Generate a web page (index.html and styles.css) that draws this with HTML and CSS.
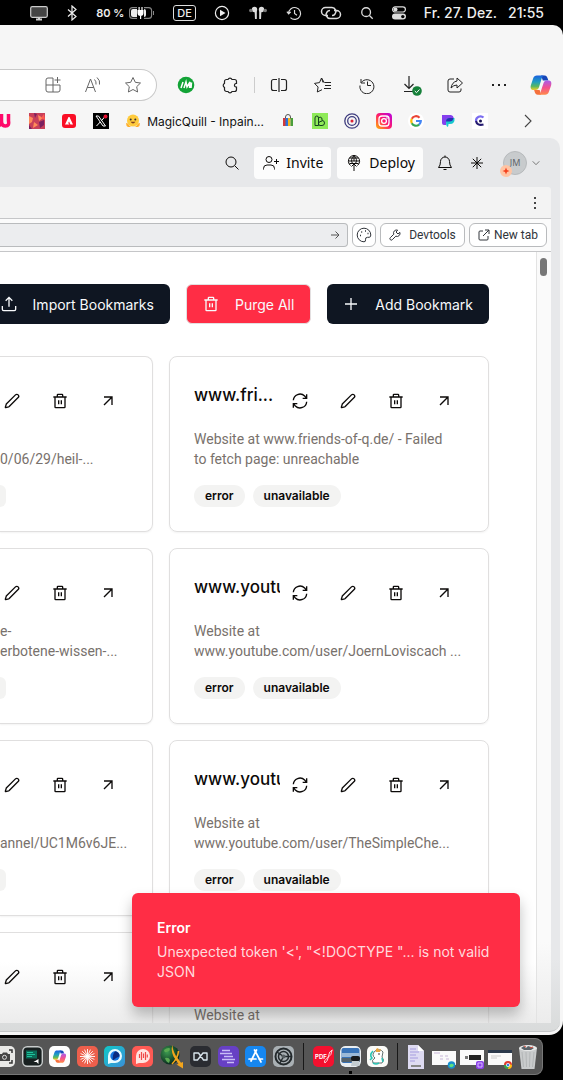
FILE: index.html
```html
<!DOCTYPE html>
<html lang="en">
<head>
<meta charset="utf-8">
<meta name="viewport" content="width=device-width, initial-scale=1">
<title>Bookmarks</title>
<link rel="stylesheet" href="styles.css">
</head>
<body>
<svg class="sprite" aria-hidden="true">
  <defs>
    <linearGradient id="g-blue" x1="0" y1="0" x2="0" y2="1"><stop offset="0" stop-color="#1b5fe0"/><stop offset=".45" stop-color="#1f9fc0"/><stop offset=".75" stop-color="#5ab860"/><stop offset="1" stop-color="#f0cf2c"/></linearGradient>
    <linearGradient id="g-pink" x1="0" y1="0" x2="0" y2="1"><stop offset="0" stop-color="#a95cec"/><stop offset=".5" stop-color="#f3508f"/><stop offset="1" stop-color="#ff8a4a"/></linearGradient>
    <linearGradient id="g-insta" x1="0" y1="1" x2="1" y2="0"><stop offset="0" stop-color="#ffb600"/><stop offset=".5" stop-color="#ff1a6c"/><stop offset="1" stop-color="#b300e6"/></linearGradient>
    <linearGradient id="g-bubble" x1="0" y1="0" x2="1" y2="1"><stop offset="0" stop-color="#10c8c8"/><stop offset="1" stop-color="#3b8fd8"/></linearGradient>
    <radialGradient id="g-globe" cx=".35" cy=".35" r=".7"><stop offset="0" stop-color="#3c9a50"/><stop offset="1" stop-color="#06231b"/></radialGradient>
  </defs>
  <symbol id="i-pencil" viewBox="0 0 24 24"><path d="M21.2 6.8a2.8 2.8 0 0 0-4-4L3.8 16.2a2 2 0 0 0-.5.8L2 21.400a.5.5 0 0 0 .6.600l4.400-1.300a2 2 0 0 0 .8-.5z"/></symbol>
  <symbol id="i-trash" viewBox="0 0 24 24"><path d="M2 6h20M19.500 6v15a1 1 0 0 1-1 1h-13a1 1 0 0 1-1-1V6M8 6V3a1 1 0 0 1 1-1h6a1 1 0 0 1 1 1v3M10 11v6M14 11v6"/></symbol>
  <symbol id="i-arrow" viewBox="0 0 24 24"><path d="M6 6h12v12M6 18 18 6"/></symbol>
  <symbol id="i-refresh" viewBox="0 0 24 24"><path d="M2 11a10 10 0 0 1 17-6.500L22 8M22 2v6h-6M22 13a10 10 0 0 1-17 6.500L2 16M2 22v-6h6"/></symbol>
  <symbol id="i-search" viewBox="0 0 16 16"><circle cx="7" cy="7" r="5"/><path d="m10.800 10.800 3.700 3.700"/></symbol>
  <symbol id="i-clock" viewBox="0 0 18 18"><path d="M3 3v4h4M3.300 6.500A7 7 0 1 1 2 9.500M9.500 5.500v4h3.500"/></symbol>
  <symbol id="i-copilot" viewBox="0 0 24 24"><path fill="#1746b8" d="M12 1.500h4c2 0 2.800 1.500 3.300 3.500l.7 2h-6z"/><path fill="url(#g-blue)" d="M7.500 1.500H15c-1.500 1-2 2.500-2.600 4.500l-2.600 8.500c-.7 2-1.700 3-3.600 3H4C.8 17.500.2 15 1 12l2.500-7.500c.7-2 2-3 4-3z"/><path fill="#f5713c" d="M12 22.500H8.500c-2 0-3-1.500-3.500-3.500l-.5-1.500h6z"/><path fill="url(#g-pink)" d="M16.500 22.500H9.500c1.500-1 2-2.500 2.600-4.500l2.600-8c.7-2 1.700-3 3.600-3H20c3.200 0 3.800 2.500 3 5.500l-2.500 7c-.7 2-2 3-4 3z"/></symbol>
</svg>

<header class="menubar">
  <svg class="mb-monitor" viewBox="0 0 18 16"><rect x=".7" y="1.700" width="16.600" height="10.600" rx="1.500" fill="#444" stroke="#ccc" stroke-width="1.200"/><path d="M6 14.500h6M9 12v2" stroke="#ccc" stroke-width="2"/></svg>
  <svg class="mb-bt" viewBox="0 0 12 16"><path d="m2 4.500 8 7L6 15V1l4 3.500-8 7" fill="none" stroke="#eee" stroke-width="1.200"/></svg>
  <span class="mb-battery">80 %
    <svg viewBox="0 0 26 12"><rect x=".6" y=".6" width="22" height="10.800" rx="3" fill="none" stroke="#888" stroke-width="1.100"/><path d="M24.500 4v4" stroke="#888"/><rect x="2" y="2" width="15" height="8" rx="2" fill="#eee"/><path d="M8 0h7v12H8z" fill="#000"/><path d="M8.500 3h6v3a3 3 0 0 1-6 0zM9.500 0h1.200v3H9.500zM12.400 0h1.200v3h-1.200zM11 8h1.200v4H11z" fill="#fff"/></svg>
  </span>
  <span class="mb-lang">DE</span>
  <svg class="mb-play" viewBox="0 0 16 16"><circle cx="8" cy="8" r="6.600" fill="none" stroke="#eee" stroke-width="1.200"/><path d="m6 4.800 5.500 3.200L6 11.200z" fill="#eee"/></svg>
  <svg class="mb-pods" viewBox="0 0 20 16"><g fill="#ddd"><circle cx="6.500" cy="4.500" r="2.700"/><path d="M6.500 4.500h2.300v9.500H7z"/><circle cx="13.500" cy="4.500" r="2.700"/><path d="M11.200 4.500h2.300L13 14h-1.800z"/></g><circle cx="2.800" cy="5.500" r="1.800" fill="#777"/><circle cx="17.200" cy="5.500" r="1.800" fill="#777"/></svg>
  <svg class="mb-clock" viewBox="0 0 18 18" fill="none" stroke="#ddd" stroke-width="1.300"><path d="M1 7.500 3 10l2.300-2.300M3 9.500a6.700 6.700 0 1 1 2 4.800M9.600 5.500v4l2.700 2"/></svg>
  <svg class="mb-link" viewBox="0 0 22 14" fill="none" stroke="#ddd" stroke-width="1.500"><path d="M8 9.500H5.500a4 4 0 0 1 0-8H12a4 4 0 0 1 3 6.500q-1 1.500-3 1.500M14 4.500h2.500a4 4 0 0 1 0 8H10A4 4 0 0 1 7 6q1-1.500 3-1.500"/></svg>
  <svg class="mb-search" fill="none" stroke="#ddd" stroke-width="1.500"><use href="#i-search"/></svg>
  <svg class="mb-toggle" viewBox="0 0 14 14"><rect x=".6" y=".8" width="12.800" height="5.200" rx="2.600" fill="none" stroke="#ddd" stroke-width="1.200"/><circle cx="3.500" cy="3.400" r="2" fill="#ddd"/><rect y="7.600" width="14" height="6" rx="3" fill="#ddd"/><circle cx="10.800" cy="10.600" r="1.700" fill="#000"/></svg>
  <time class="mb-time"><span>Fr. 27. Dez.</span><span>21:55</span></time>
</header>

<main class="window">
  <div class="toolbar">
    <div class="address">
      <button aria-label="Add app"><svg class="s18" viewBox="0 0 18 18"><path d="M9 2H4a2 2 0 0 0-2 2v10a2 2 0 0 0 2 2h10a2 2 0 0 0 2-2V9H2M9 2v14M13.500 1v6M10.500 4h6"/></svg></button>
      <button aria-label="Read aloud"><svg class="s18" viewBox="0 0 18 18"><path d="M1.500 16 6.500 3l5 13M3.200 11.500h6.600M10.500 3.500q2 2 1.500 5M13 1.500q3.500 3 2.500 7"/></svg></button>
      <button aria-label="Add to favourites"><svg class="s18" viewBox="0 0 18 18"><path d="m9 1.500 2.300 4.800 5.200.7-3.800 3.700.9 5.300L9 13.500 4.400 16l.9-5.300L1.500 7l5.200-.7z"/></svg></button>
    </div>
    <button aria-label="IM extension"><svg class="s18" viewBox="0 0 18 18"><circle cx="9" cy="9" r="8.300" fill="#12a336" stroke="none"/><path d="m4 12 2-6M7 12l2-6 1 5 3-5-.5 6M14.500 6.500 14 12" stroke="#fff" stroke-width="1.500"/></svg></button>
    <button aria-label="Extensions"><svg class="s18" viewBox="0 0 18 18"><path d="M5.500 3.500H7a2.200 2.200 0 0 1 4 0h2.500a2 2 0 0 1 2 2v2h-.7a1.800 1.800 0 0 0 0 3.500h.7v2.500a2 2 0 0 1-2 2H11a2.200 2.200 0 0 1-4 0H5.500a2 2 0 0 1-2-2V11.400a2.200 2.200 0 0 1 0-4V5.500a2 2 0 0 1 2-2z" stroke-width="1.200"/></svg></button>
    <span class="divider"></span>
    <button aria-label="Split screen"><svg class="s18" viewBox="0 0 18 18"><path d="M7 3.500H3.500a2 2 0 0 0-2 2v7a2 2 0 0 0 2 2H7M11 3.500h3.500a2 2 0 0 1 2 2v7a2 2 0 0 1-2 2H11M9 2v14" stroke-width="1.200"/></svg></button>
    <button aria-label="Favourites"><svg class="s18" viewBox="0 0 18 18"><path d="m10.500 7-3-5-2 4.600-5 .8 3.600 3.600L3.300 16 8 13.700M11 6.500h6M11 9.500h6M10 12.500h7M7.500 2 9 6.500"/></svg></button>
    <button aria-label="History"><svg class="s18"><use href="#i-clock"/></svg></button>
    <button aria-label="Downloads"><svg class="s22" viewBox="0 0 22 22"><path d="M9 2v12M4.500 10 9 14.500 13.500 10M4 17.500h9" stroke-width="1.200"/><circle cx="17" cy="17" r="4.800" fill="#16803a" stroke="none"/><path d="m14.800 17 1.700 1.700 3-3.200" stroke="#fff"/></svg></button>
    <button aria-label="Share"><svg class="s18" viewBox="0 0 18 18"><path d="M8 3H4a2 2 0 0 0-2 2v9a2 2 0 0 0 2 2h9a2 2 0 0 0 2-2v-1.500M11 2v3Q6 6 5 12q2.500-3 6-3v3l5.500-5z"/></svg></button>
    <button aria-label="More"><svg class="s18" viewBox="0 0 18 18"><path d="M2 9h2M8 9h2M14 9h2" stroke-width="2"/></svg></button>
    <button class="copilot" aria-label="Copilot"><svg class="s22"><use href="#i-copilot"/></svg></button>
  </div>

  <nav class="bookmarks">
    <a href="#" aria-label="U"><svg class="s16" viewBox="0 0 16 16"><path d="M4.500 1v7q0 5 4 5t3-5V1M0 9l3 5" fill="none" stroke="#ff0a6a" stroke-width="3.500"/></svg></a>
    <a href="#" aria-label="Art"><svg class="s16" viewBox="0 0 16 16"><path fill="#c8405a" d="M0 0h16v16H0z"/><path fill="#ff8c5a" d="m0 3 4 2-1 4-3 2zM9 2l5 3-4 3zM5 9l4 3-5 3z"/><path fill="#7a2060" d="m5 0 3 1-2 4zM10 9l5-2v5l-4 3zM0 12l3 4H0z"/><path fill="#ff5a50" d="m12 5 3-4 1 6z"/></svg></a>
    <a href="#" aria-label="Adobe"><svg class="s16" viewBox="0 0 16 16"><rect x="1" y="1" width="14" height="14" rx="3" fill="#fa0f26"/><path d="M4 11.500 7.500 4h1L12 11.500H9.500L8 8.500l-1 2h1.200v1z" fill="#fff"/></svg></a>
    <a href="#" aria-label="X"><svg class="s16" viewBox="0 0 16 16"><path d="M0 0h16v16H0z"/><path d="m3 3 7 10h2.500L5.500 3zM12.500 3 8.700 7.400M7.200 9 3.500 13" fill="none" stroke="#fff"/><circle cx="12.500" cy="3.500" r="2" fill="#e81030"/></svg></a>
    <a href="#" class="named"><svg class="s16" viewBox="0 0 16 16"><circle cx="8" cy="7.500" r="6" fill="#ffcb3d"/><path d="M1 10q2 0 3 2t3 2H3q-2-1-2-4zM15 10q-2 0-3 2t-3 2h4q2-1 2-4z" fill="#ffb02d"/><circle cx="5.700" cy="6.500" r="1" fill="#333"/><circle cx="10.300" cy="6.500" r="1" fill="#333"/><path d="M5.500 8.800q2.500 3.500 5 0z" fill="#7d3f20"/></svg><span>MagicQuill - Inpain...</span></a>
    <a href="#" aria-label="Shop"><svg class="s16" viewBox="0 0 16 16"><path d="M5.500 6V4a2.500 2.500 0 0 1 5 0v2" fill="none" stroke="#555"/><path fill="#d23a3a" d="M3 5h3v8H3z"/><path fill="#2a74d8" d="M5.500 5H8v8H5.500z"/><path fill="#f5b321" d="M8 5h2.500v8H8z"/><path fill="#4a9e3c" d="M10.500 5H13v8h-2.500z"/></svg></a>
    <a href="#" aria-label="Lb"><svg class="s16" viewBox="0 0 16 16"><path fill="#8eea58" d="M0 0h16v16H0z"/><path d="M6.500 12.500H3V5q0-2 1.800-2t1.700 2v7.500M6.500 5q3-2 3.500 1v1.500q2.500 0 2.500 2.500t-2.500 2.500H8q-1.500 0-1.500-2T10 8" fill="none" stroke="#153f20"/></svg></a>
    <a href="#" aria-label="Target"><svg class="s16" viewBox="0 0 16 16" fill="none" stroke="#3f3d7f" stroke-width="1.300"><circle cx="8" cy="8" r="7.200"/><circle cx="8" cy="8" r="4.300"/><circle cx="8" cy="8" r=".9" fill="#d23" stroke="#d23"/></svg></a>
    <a href="#" aria-label="Instagram"><svg class="s16" viewBox="0 0 16 16"><rect width="16" height="16" rx="4" fill="url(#g-insta)"/><g fill="none" stroke="#fff" stroke-width="1.300"><rect x="3" y="3" width="10" height="10" rx="3"/><circle cx="8" cy="8" r="2.400"/></g><circle cx="11" cy="5" r=".8" fill="#fff"/></svg></a>
    <a href="#" aria-label="Google"><svg class="s16" viewBox="0 0 16 16"><circle cx="8" cy="8" r="8" fill="#fff"/><g fill="none" stroke-width="2.200"><path d="M11.500 4.700A4.800 4.800 0 0 0 3.800 5.800" stroke="#ea4335"/><path d="M3.800 5.800a4.800 4.800 0 0 0 0 4.400" stroke="#fbbc05"/><path d="M3.800 10.200a4.800 4.800 0 0 0 7.300 1.400" stroke="#34a853"/><path d="M11.100 11.600A4.800 4.800 0 0 0 12.800 8H8" stroke="#4285f4"/></g></svg></a>
    <a href="#" aria-label="Poly"><svg class="s16" viewBox="0 0 16 16"><path d="M2 2h9a3.500 3.500 0 0 1 1 6.500H6V12H4a2 2 0 0 1-2-2z" fill="#8540ee"/><path d="M6 8.500Q6 5 9.500 5h5q.5 6-4.500 6H8.500q0 3-1 3Q6 13 6 8.500z" fill="#17c8cf"/><path d="M9.500 5h4q-.5 3.500-4 3.500H6Q6 5 9.500 5z" fill="#2a2fb0"/></svg></a>
    <a href="#" aria-label="Clipdrop"><svg class="s16" viewBox="0 0 16 16"><path fill="#fff" d="M0 0h16v16H0z"/><path d="M11.500 4.500A4.500 4.500 0 0 0 4 8" fill="none" stroke="#7a6cf0" stroke-width="2.200"/><path d="M4 8q1 5 7.500 3.500" fill="none" stroke="#241a70" stroke-width="2.200"/><circle cx="8.500" cy="8" r="1.500" fill="#191450"/></svg></a>
    <button class="more" aria-label="More bookmarks"><svg class="s16" viewBox="0 0 16 16"><path d="m5 2 6 6-6 6" stroke="#444" stroke-width="1.100"/></svg></button>
  </nav>

  <section class="frame">
    <div class="app-header">
      <button class="tool" aria-label="Search"><svg class="s16"><use href="#i-search"/></svg></button>
      <button class="action"><svg class="s18" viewBox="0 0 18 18"><circle cx="7" cy="5.500" r="3"/><path d="M1.500 15.500v-1a3.500 3.500 0 0 1 3.500-3.500h4a3.500 3.500 0 0 1 3.500 3.500v1M14.500 5v5M12 7.500h5"/></svg>Invite</button>
      <button class="action"><svg class="s18" viewBox="0 0 18 18"><path d="M5.500 11.500a5.600 5.600 0 1 1 7 0M3.500 7h11M4.500 4h9M4.500 9.500h9M9 1.500q-4 4-1.500 8M9 1.500q4 4 1.500 8M9 1.500V7M9 17v-6M6.500 12.500 9 10l2.500 2.500"/></svg>Deploy</button>
      <button class="tool" aria-label="Notifications"><svg class="s16" viewBox="0 0 16 16"><path d="M1.500 12.500h13q-2-2-2-6a4.500 4.500 0 0 0-9 0q0 4-2 6zM6.500 14.500h3M8 .5V2"/></svg></button>
      <button class="tool" aria-label="Assistant"><svg class="s16" viewBox="0 0 16 16"><path d="M8 2v12M2 8h12M3.800 3.800l8.400 8.400M12.200 3.800l-8.400 8.400"/></svg></button>
      <button class="user"><span class="avatar">JM<svg class="avatar-badge" viewBox="0 0 12 12"><circle cx="6" cy="6" r="6" fill="#ffc4a3"/><path d="M6 2.500 7 5l2.500 1L7 7 6 9.500 5 7 2.500 6 5 5z" fill="#f4421e" stroke="none"/></svg></span><svg class="chev" viewBox="0 0 8 8"><path d="m.7 2.300 3.300 3.400 3.300-3.400" stroke="#777"/></svg></button>
    </div>

    <div class="panel">
      <div class="tabs"><button aria-label="Tab menu"><svg class="s16" viewBox="0 0 16 16"><path d="M7 3h2M7 8h2M7 13h2" stroke="#444" stroke-width="2"/></svg></button></div>
      <div class="urlbar">
        <div class="url"><input type="text" aria-label="URL"><button aria-label="Go"><svg class="s10" viewBox="0 0 10 10"><path d="M1 5h8M5.500 1.500 9 5 5.500 8.500" stroke="#555"/></svg></button></div>
        <button class="chip square" aria-label="Theme"><svg class="s16" viewBox="0 0 16 16"><path d="M8 1.200a6.800 6.800 0 1 0 0 13.600q1.800 0 1.500-2-.4-2.500 2-2.500h1.600q1.700 0 1.700-2.300A6.800 6.800 0 0 0 8 1.200z"/><path d="M4 8.500h1M5.200 5h1M9 4h1M11.500 6.500h1" stroke-width="1.400"/></svg></button>
        <button class="chip dev"><svg class="s12" viewBox="0 0 12 12"><path d="M10.800 3.300 9 5 7 3l1.700-1.800a3 3 0 0 0-3.900 4L1.300 8.700a1.400 1.400 0 0 0 2 2L6.800 7.200a3 3 0 0 0 4-3.900z"/></svg>Devtools</button>
        <button class="chip tab"><svg class="s12" viewBox="0 0 12 12"><path d="M5 2H2a1 1 0 0 0-1 1v7a1 1 0 0 0 1 1h7a1 1 0 0 0 1-1V7M7 1h4v4M5 7l6-6"/></svg>New tab</button>
      </div>

      <div class="viewport">
        <div class="page">
          <div class="page-actions">
            <button class="btn dark"><svg class="s16" viewBox="0 0 24 24"><path d="M2 15v5a2 2 0 0 0 2 2h16a2 2 0 0 0 2-2v-5M7 7l5-5 5 5M12 2v14"/></svg>Import Bookmarks</button>
            <button class="btn danger"><svg class="s16"><use href="#i-trash"/></svg>Purge All</button>
            <button class="btn dark"><svg class="s16" viewBox="0 0 24 24"><path d="M3 12h18M12 3v18"/></svg>Add Bookmark</button>
          </div>
          <div class="cards">
            <article class="card cut">
              <div class="card-head"><button aria-label="Edit"><svg class="s16"><use href="#i-pencil"/></svg></button><button aria-label="Delete"><svg class="s16"><use href="#i-trash"/></svg></button><button aria-label="Open"><svg class="s16"><use href="#i-arrow"/></svg></button></div>
              <p><br>0/06/29/heil-...</p>
              <div class="tags"><span></span></div>
            </article>
            <article class="card">
              <div class="card-head"><h2>www.fri...</h2><button aria-label="Refresh"><svg class="s16"><use href="#i-refresh"/></svg></button><button aria-label="Edit"><svg class="s16"><use href="#i-pencil"/></svg></button><button aria-label="Delete"><svg class="s16"><use href="#i-trash"/></svg></button><button aria-label="Open"><svg class="s16"><use href="#i-arrow"/></svg></button></div>
              <p>Website at www.friends-of-q.de/ - Failed<br>to fetch page: unreachable</p>
              <div class="tags"><span>error</span><span>unavailable</span></div>
            </article>
            <article class="card cut">
              <div class="card-head"><button aria-label="Edit"><svg class="s16"><use href="#i-pencil"/></svg></button><button aria-label="Delete"><svg class="s16"><use href="#i-trash"/></svg></button><button aria-label="Open"><svg class="s16"><use href="#i-arrow"/></svg></button></div>
              <p>e-<br>erbotene-wissen-...</p>
              <div class="tags"><span></span></div>
            </article>
            <article class="card">
              <div class="card-head"><h2>www.youtu</h2><button aria-label="Refresh"><svg class="s16"><use href="#i-refresh"/></svg></button><button aria-label="Edit"><svg class="s16"><use href="#i-pencil"/></svg></button><button aria-label="Delete"><svg class="s16"><use href="#i-trash"/></svg></button><button aria-label="Open"><svg class="s16"><use href="#i-arrow"/></svg></button></div>
              <p>Website at<br>www.youtube.com/user/JoernLoviscach ...</p>
              <div class="tags"><span>error</span><span>unavailable</span></div>
            </article>
            <article class="card cut">
              <div class="card-head"><button aria-label="Edit"><svg class="s16"><use href="#i-pencil"/></svg></button><button aria-label="Delete"><svg class="s16"><use href="#i-trash"/></svg></button><button aria-label="Open"><svg class="s16"><use href="#i-arrow"/></svg></button></div>
              <p><br>annel/UC1M6v6JE...</p>
              <div class="tags"><span></span></div>
            </article>
            <article class="card">
              <div class="card-head"><h2>www.youtu</h2><button aria-label="Refresh"><svg class="s16"><use href="#i-refresh"/></svg></button><button aria-label="Edit"><svg class="s16"><use href="#i-pencil"/></svg></button><button aria-label="Delete"><svg class="s16"><use href="#i-trash"/></svg></button><button aria-label="Open"><svg class="s16"><use href="#i-arrow"/></svg></button></div>
              <p>Website at<br>www.youtube.com/user/TheSimpleChe...</p>
              <div class="tags"><span>error</span><span>unavailable</span></div>
            </article>
            <article class="card cut">
              <div class="card-head"><button aria-label="Edit"><svg class="s16"><use href="#i-pencil"/></svg></button><button aria-label="Delete"><svg class="s16"><use href="#i-trash"/></svg></button><button aria-label="Open"><svg class="s16"><use href="#i-arrow"/></svg></button></div>
            </article>
            <article class="card">
              <div class="card-head"></div>
              <p>Website at</p>
            </article>
          </div>
        </div>
        <div class="scrollbar"><span></span></div>
        <div class="toast" role="alert"><strong>Error</strong><p>Unexpected token '&lt;', "&lt;!DOCTYPE "... is not valid JSON</p></div>
      </div>
    </div>
  </section>
</main>

<footer class="dock">
  <div class="apps">
    <svg viewBox="0 0 21 21"><rect width="21" height="21" rx="5" fill="#e8e8e6"/><path d="M3 7V4h3M15 4h3v3M3 14v3h3M15 17h3v-3" fill="none" stroke="#333" stroke-width="1.500"/><path d="M5 8h3l1-1.500h4L14 8h2v7H5z" fill="#444"/><circle cx="10.500" cy="11.300" r="2" fill="none" stroke="#ddd"/></svg>
    <svg viewBox="0 0 21 21"><rect x=".7" y=".7" width="19.600" height="19.600" rx="4.500" fill="#182020" stroke="#c8cccc" stroke-width="1.400"/><path d="M4 4.500h11v8H4z" fill="#0b6b58"/><path d="M5 6.500h6M5 8.500h8M5 10.500h5" stroke="#1ec29c"/><path d="m11.500 16 5-3v5l-2-2z" fill="#fff"/></svg>
    <svg viewBox="0 0 21 21"><rect width="21" height="21" rx="5" fill="#fdfdfd"/><use href="#i-copilot" x="3.500" y="3.500" width="14" height="14"/></svg>
    <svg viewBox="0 0 21 21"><rect width="21" height="21" rx="5" fill="#ed5f4c"/><path d="M10.500 3v15M3 10.500h15M5.200 5.200l10.600 10.600M15.800 5.200 5.200 15.800M7.600 3.600l5.800 13.800M13.400 3.600 7.600 17.400M3.600 7.600l13.800 5.800M3.600 13.400l13.800-5.800" stroke="#fff" stroke-width=".9"/></svg>
    <svg viewBox="0 0 21 21"><rect width="21" height="21" rx="5" fill="url(#g-bubble)"/><path d="M4 18V10a7 7 0 1 1 7 7H7z" fill="#e8fbff"/><circle cx="11" cy="10" r="4.700" fill="#1474e0"/><path d="M11 5.300a4.700 4.700 0 0 1 4.500 5Q12 12 9 14.200 8 9 11 5.300z" fill="#0b2c80"/></svg>
    <svg viewBox="0 0 21 21"><rect width="21" height="21" rx="5" fill="#ff5a54"/><path d="M4 18V10a7 7 0 1 1 7 7H7z" fill="#ffe4e0"/><path d="M7.500 8v4M9.500 6v8M11.500 7.500V12M13.500 6v8M15.300 8.500v3" stroke="#f04a48" stroke-width="1.200"/></svg>
    <svg class="globe" viewBox="0 0 24 24"><circle cx="10" cy="10" r="9.500" fill="url(#g-globe)"/><path d="M4 5q4-3 6-1.500 0 3-3.500 3.500-2 1-2.500-2zM5 13q4-1 5 2l-1 3q-3-1-4-5z" fill="#5aa952"/><path d="M12.500 0q-2 5 1 11.500L18.500 19l-2 .5 6.500 4v-6.500l-2 .7-5-6.700q-3.500-6-3.500-11z" fill="#f3a51c"/><path d="M12 19q6-6 6.500-13" fill="none" stroke="#f3a51c" stroke-width="1.600"/></svg>
    <svg viewBox="0 0 21 21"><rect width="21" height="21" rx="5" fill="#2a2c31"/><path d="M4 7v7h3.500L13 7h4v7h-3.500L8.500 7z" fill="none" stroke="#d8e4ec" stroke-width="1.400" stroke-linejoin="round"/></svg>
    <svg viewBox="0 0 21 21"><rect width="21" height="21" rx="5" fill="#6740c4"/><path d="M4 4.500h8M2 7.500h12M6 10.500h9M4 13.500h13M9 16.500h7" stroke="#c9bdf6" stroke-width="1.600"/></svg>
    <svg viewBox="0 0 21 21"><rect width="21" height="21" rx="5" fill="#1687f0"/><path d="M11.500 4 6 15M9.500 4l6.500 12M4 13h7M14 13h3.500" stroke="#fff" stroke-width="1.700" stroke-linecap="round"/></svg>
    <svg viewBox="0 0 21 21"><rect width="21" height="21" rx="5" fill="#a9b0b4"/><g fill="none" stroke="#23292c"><circle cx="10.500" cy="10.500" r="8" stroke-width="2"/><circle cx="10.500" cy="10.500" r="5" stroke-width="1.500"/><path d="M10.500 10.500 4 6M10.500 10.500h8M10.500 10.500 7 17" stroke-width="1.400"/></g><circle cx="10.500" cy="10.500" r="2" fill="#555d60"/></svg>
  </div>
  <span class="sep"></span>
  <div class="recent">
    <svg viewBox="0 0 21 21" role="img" aria-label="PDF"><rect width="21" height="21" rx="5" fill="#f4112f"/><text x="2" y="13" class="pdf">PDF</text><path d="M19.500 4q-3.500 1-4 6T12 17q-2-2 2.500-5t4.500-8" fill="none" stroke="#fff" stroke-width=".8"/></svg>
    <svg class="running" viewBox="0 0 21 21"><rect width="21" height="21" rx="5" fill="#e9edf0"/><rect x="1.500" y="2" width="18" height="15" rx="2" fill="#3873b8"/><path d="M1.500 7h18v4h-18z" fill="#9bb9d8"/><path d="M1.500 12h18v4h-18z" fill="#55636d"/><rect x="11" y="10" width="9" height="5" rx="2" fill="#181a1c"/><path d="M12 15h7l1 5h-9z" fill="#c5cdd1"/></svg>
    <svg viewBox="0 0 21 21"><rect width="21" height="21" rx="5" fill="#fbfbf8"/><path d="M8 5q5-3 8 1l-1 5q3 3 0 6H6q-2-3 2-5-4-3 0-7z" fill="#fff" stroke="#63706f"/><path d="M6 5q-4 4-1 7l-2 2M6 17q3 2 6 0M15 12l1 4" fill="none" stroke="#2cc4b4" stroke-width="1.600"/><path d="m9 3 2-1 1 2 2-1-1 3H9z" fill="#e9a33d"/><circle cx="12" cy="8" r=".8" fill="#222"/></svg>
  </div>
  <span class="sep late"></span>
  <div class="files">
    <svg viewBox="0 0 24 26"><path d="M4 1h10l6 6v18H4z" fill="#dedbf2"/><path d="M14 1v6h6z" fill="#fff"/><path d="M6 5h6M6 8h9M6 11h6M6 14h8M6 17h5" stroke="#a59cdf"/><path d="M7 22h10" stroke="#888" stroke-width="2"/></svg>
    <svg viewBox="0 0 24 26"><path d="M0 7h24v14H0z" fill="#fafafa"/><path d="M2 9h6M8 12h3M13 12h3M8 15h3M14 15h3" stroke="#c8b6d8"/><circle cx="19.500" cy="21" r="3.800" fill="#178fd0"/><path d="M17 22q2-4 5-1-2 4-5 1" fill="#60e080"/></svg>
    <svg viewBox="0 0 24 26"><path d="M0 6h24v15H0z" fill="#fafafa"/><path d="M9 11h12v5H9z" fill="#222"/><path d="M5 12h3v3H5z" fill="#777"/><rect x="16" y="17" width="8" height="8" rx="2" fill="#8b42e8"/><path d="M18 19h4v4h-4z" fill="none" stroke="#d7b8ff"/></svg>
    <svg viewBox="0 0 24 26"><path d="M0 6h24v15H0z" fill="#fafafa"/><path d="M0 6h24v3H0z" fill="#2c3a4c"/><path d="M3 12h10M3 14h6" stroke="#ccc"/><circle cx="20" cy="21" r="4" fill="#e33b2e"/><path d="M16 21a4 4 0 0 0 4 4l2-4z" fill="#2da94f"/><path d="M24 21a4 4 0 0 1-4 4l1.500-5z" fill="#fbc116"/><circle cx="20" cy="21" r="1.700" fill="#3b7de8" stroke="#fff" stroke-width=".7"/></svg>
    <svg viewBox="0 0 24 26"><path d="M3 4h18l-2.500 21h-13z" fill="#c9cbcc"/><path d="M6 8l1.500 15M10 8l.5 15M14 8l-.5 15M18 8l-1.500 15" stroke="#b3b6b7"/><ellipse cx="12" cy="4" rx="9" ry="3" fill="#e9eaea"/><path d="m5 4 3-2 2 2 2-2 3 1 3 1-3 2H8z" fill="#5a6268"/><path d="M8 2l2 1M14 4l3-1" stroke="#d85040"/></svg>
  </div>
</footer>
</body>
</html>
```
FILE: styles.css
```css
* { box-sizing: border-box; }

body {
  margin: 0;
  height: 100vh;
  display: flex;
  flex-direction: column;
  overflow: hidden;
  background: #000;
  color: #0c0a09;
  font-family: Inter, "Liberation Sans", sans-serif;
  font-size: 14px;
}

button {
  display: flex;
  align-items: center;
  justify-content: center;
  flex: none;
  margin: 0;
  padding: 0;
  border: 0;
  background: none;
  color: inherit;
  font: inherit;
}

button svg { fill: none; stroke: currentColor; }
svg { display: block; flex: none; }
h2, p { margin: 0; }

.sprite { position: absolute; width: 0; height: 0; }
.s10 { width: 10px; height: 10px; }
.s12 { width: 12px; height: 12px; }
.s16 { width: 16px; height: 16px; }
.s18 { width: 18px; height: 18px; }
.s22 { width: 22px; height: 22px; }

/* System menu bar */
.menubar {
  display: flex;
  flex: none;
  align-items: center;
  justify-content: flex-end;
  gap: 18px;
  height: 25px;
  padding-right: 19px;
  color: #eee;
  white-space: nowrap;
}
.mb-monitor { width: 18px; height: 16px; }
.mb-bt { width: 12px; height: 16px; }
.mb-battery { display: flex; align-items: center; gap: 5px; font-size: 11px; font-weight: 600; }
.mb-battery svg { width: 26px; height: 12px; }
.mb-lang { padding: 0 3px; border: 1px solid #ddd; border-radius: 3px; font-size: 11px; line-height: 14px; font-weight: 500; }
.mb-play, .mb-clock { width: 16px; height: 16px; }
.mb-pods { width: 20px; height: 16px; }
.mb-link { width: 22px; height: 14px; }
.mb-search, .mb-toggle { width: 14px; height: 14px; }
.mb-time { display: flex; gap: 11px; font-weight: 500; line-height: 22px; }

/* Browser window */
.window {
  display: flex;
  flex: 1;
  flex-direction: column;
  min-height: 0;
  padding: 44px 0 3px;
  border-radius: 0 10px 14px 0;
  background: #f6f6f6;
}
.toolbar { display: flex; flex: none; height: 32px; padding-right: 2px; color: #222; }
.toolbar > button { width: 44px; }
.toolbar > .copilot { width: 40px; }
.copilot svg { stroke: none; }
.address {
  display: flex;
  flex: 1;
  justify-content: flex-end;
  min-width: 0;
  margin-right: 7px;
  padding-right: 3px;
  border: 1px solid #c9c9c9;
  border-left: 0;
  border-radius: 0 16px 16px 0;
  background: #fff;
  color: #666;
}
.address button { width: 40px; }
.divider { flex: none; width: 1px; height: 16px; margin: 8px 2px; background: #ccc; }

.bookmarks {
  display: flex;
  flex: none;
  align-items: center;
  justify-content: flex-end;
  gap: 16px;
  height: 32px;
  margin: 4px 0 1px;
  padding-right: 27px;
}
.bookmarks a { display: flex; flex: none; color: #111; text-decoration: none; }
.bookmarks .named { align-items: center; gap: 6px; font-size: 12px; white-space: nowrap; }
.bookmarks .more { margin-left: 16px; }

/* Editor frame */
.frame {
  display: flex;
  flex: 1;
  flex-direction: column;
  min-height: 0;
  margin-right: 3px;
  padding: 0 9px 8px 0;
  border-radius: 0 10px 10px 0;
  border-bottom: 1px solid #c4c6c7;
  background: linear-gradient(#e7e8ea 92%, #d9dbdb);
}
.app-header {
  display: flex;
  flex: none;
  align-items: center;
  justify-content: flex-end;
  height: 49px;
  padding-right: 11px;
  font-family: "Noto Sans", Roboto, sans-serif;
}
.tool { width: 32px; height: 32px; }
.action { gap: 6px; height: 32px; margin: 0 0 0 6px; padding: 0 8px; border-radius: 4px; background: #fcfcfc; }
.action + .tool { margin-left: 6px; }
.user { gap: 5px; margin-left: 10px; }
.avatar {
  position: relative;
  display: flex;
  align-items: center;
  justify-content: center;
  width: 24px;
  height: 24px;
  border: 1px solid #b7babc;
  border-radius: 50%;
  background: #c8cbcd;
  color: #60656a;
  font-size: 9px;
}
.avatar .avatar-badge { position: absolute; bottom: -3px; left: -4px; width: 12px; height: 12px; stroke: none; }
.chev { width: 8px; height: 8px; }

.panel { display: flex; flex: 1; flex-direction: column; min-height: 0; border-radius: 0 3px 0 0; background: #f3f3f3; }
.tabs { display: flex; flex: none; align-items: center; justify-content: flex-end; height: 32px; padding-right: 8px; border-bottom: 1px solid #c5c6c8; }
.urlbar {
  display: flex;
  flex: none;
  align-items: center;
  gap: 4px;
  height: 33px;
  padding-right: 4px;
  border-bottom: 1px solid #c5c6c8;
  background: #fbfbfb;
  font-family: Roboto, "Noto Sans", sans-serif;
}
.url { display: flex; flex: 1; min-width: 0; height: 24px; padding-right: 7px; border: 1px solid #b9bbbd; border-left: 0; border-radius: 0 4px 4px 0; background: #ecedef; }
.url input { flex: 1; min-width: 0; border: 0; background: none; font: inherit; }
.chip { gap: 6px; height: 24px; border: 1px solid #b9bbbd; border-radius: 6px; background: #fff; color: #30343a; font-size: 12px; }
.square { width: 24px; }
.dev { width: 85px; gap: 8px; }
.tab { width: 78px; gap: 4px; }

/* Bookmarks page */
.viewport { position: relative; display: flex; flex: 1; min-height: 0; overflow: hidden; background: #fff; }
.page { flex: 1; min-width: 0; padding: 32px 47px 0 0; background: linear-gradient(#fff 710px, #ececec 771px); }
.scrollbar { flex: none; width: 15px; padding: 6px 4px 0 3px; border-left: 1px solid #e3e3e3; background: linear-gradient(#fafafa 690px, #ececec 771px); }
.scrollbar span { display: block; width: 7px; height: 18px; border-radius: 4px; background: #777; }
.page-actions { display: flex; justify-content: flex-end; gap: 16px; }
.btn { gap: 16px; height: 40px; padding: 0 16px; border-radius: 6px; color: #f8fafc; white-space: nowrap; }
.btn svg { stroke-width: 2px; }
.dark { background: #0f1622; }
.danger { border: 1px solid #e3dfe0; background: #ff2d45; }

.cards { display: grid; grid-template-columns: minmax(0, 1fr) 320px; grid-auto-rows: 176px; gap: 16px; margin-top: 32px; }
.card { min-width: 0; padding: 24px; border: 1px solid #e0dfdf; border-radius: 8px; box-shadow: 0 1px 2px rgb(0 0 0 / 5%); }
.cut { padding-left: 0; border-left: 0; border-radius: 0 8px 8px 0; }
.card-head { display: flex; justify-content: flex-end; height: 40px; margin-bottom: 8px; }
.card-head button { width: 40px; height: 40px; margin-left: 8px; }
.card-head button:first-of-type { margin-left: 0; }
.card-head svg { stroke-width: 2px; }
.card-head h2 { flex: 1; min-width: 0; overflow: hidden; font-size: 17px; font-weight: 500; line-height: 28px; white-space: nowrap; }
.card p { height: 40px; color: #78716c; font-family: Roboto, sans-serif; line-height: 20px; white-space: nowrap; }
.tags { display: flex; gap: 8px; margin-top: 16px; }
.tags span { height: 22px; padding: 0 11px; border-radius: 11px; background: #f3f3f2; font-size: 12px; font-weight: 600; line-height: 22px; }
.cut .tags span { width: 6px; padding: 0; border-radius: 0 11px 11px 0; }

.toast {
  position: absolute;
  right: 31px;
  bottom: 16px;
  width: 388px;
  max-width: calc(100% - 47px);
  padding: 25px;
  border-radius: 6px;
  background: #ff2d45;
  box-shadow: 0 8px 14px rgb(0 0 0 / 25%);
  color: #fff;
  line-height: 20px;
}
.toast strong { display: block; margin-bottom: 4px; font-weight: 600; }
.toast p { color: #ffdade; }

/* Dock */
.dock {
  display: flex;
  flex: none;
  align-items: center;
  height: 37px;
  margin: 3px 20px 5px 0;
  padding-right: 2px;
  border: 1px solid #777;
  border-width: 1px 1px 1px 0;
  border-radius: 0 8px 8px 0;
  background: #555;
}
.dock svg { width: 21px; height: 21px; }
.apps { display: flex; flex: 1; align-items: center; justify-content: space-between; min-width: 0; margin-left: -6px; }
.dock .globe { width: 24px; height: 24px; }
.sep { flex: none; width: 1px; height: 27px; margin: 0 9px; background: #181818; }
.late { margin-right: 6px; }
.recent { display: flex; gap: 6px; }
.dock .running { border-radius: 5px; box-shadow: 0 16px 0 -9px #000; }
.pdf { fill: #fff; font-size: 6px; font-weight: 700; }
.files { display: flex; gap: 4px; }
.dock .files svg { width: 24px; height: 26px; }
```
